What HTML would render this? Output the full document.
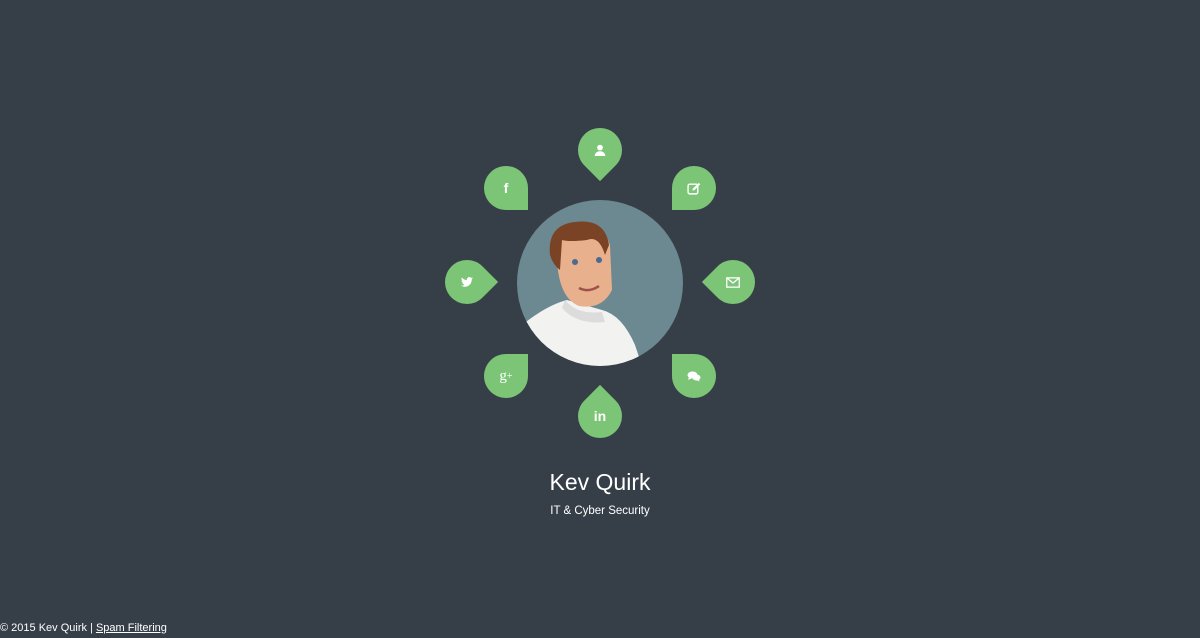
<!DOCTYPE html>
<html><head><meta charset="utf-8"><style>
html,body{margin:0;padding:0;width:1200px;height:638px;background:#363f48;overflow:hidden;font-family:"Liberation Sans",sans-serif}
.p{position:absolute;width:44px;height:44px;background:#7cc576;border-radius:50%}
.ic{position:absolute;width:44px;height:44px;display:flex;align-items:center;justify-content:center;color:#fff;font-size:14px;font-weight:bold}
.av{position:absolute;left:517px;top:200px;width:166px;height:166px;border-radius:50%;background:#6c8891;overflow:hidden}
h1{position:absolute;top:469px;left:0;width:1200px;text-align:center;margin:0;font-weight:normal;font-size:23px;color:#fff}
.sub{position:absolute;top:505px;left:0;width:1200px;text-align:center;font-size:11.5px;color:#fff}
.ft{position:absolute;left:0;top:622px;font-size:11px;color:#fff}
.ft u{text-decoration:underline}
</style></head><body>
<div class="p" style="left:578px;top:128px;transform:rotate(45deg);border-bottom-right-radius:0"></div>
<div class="ic" style="left:578px;top:128px"><svg width="12" height="12" viewBox="0 0 10 10"><circle cx="5" cy="3" r="2.4" fill="#fff"/><path d="M0.5 10 Q1 6 5 6 Q9 6 9.5 10Z" fill="#fff"/></svg></div>
<div class="p" style="left:484px;top:166px;border-bottom-right-radius:0"></div>
<div class="ic" style="left:484px;top:166px">f</div>
<div class="p" style="left:672px;top:166px;border-bottom-left-radius:0"></div>
<div class="ic" style="left:672px;top:166px"><svg width="14" height="13" viewBox="0 0 13 12"><rect x="1" y="2" width="9" height="9" rx="1.5" fill="none" stroke="#fff" stroke-width="1.3"/><path d="M5 8 L5.5 6 L11 0.8 L12.3 2 L7 7.5Z" fill="#fff"/></svg></div>
<div class="p" style="left:445px;top:260px;transform:rotate(45deg);border-top-right-radius:0"></div>
<div class="ic" style="left:445px;top:260px"><svg width="12" height="10" viewBox="0 0 24 20"><path d="M24 2.4a10 10 0 0 1-2.8.8A5 5 0 0 0 23.3.5a10 10 0 0 1-3.1 1.2A4.9 4.9 0 0 0 11.8 6 14 14 0 0 1 1.700.9a4.9 4.9 0 0 0 1.5 6.6A4.9 4.9 0 0 1 1 6.9a4.9 4.9 0 0 0 3.9 4.8 4.9 4.9 0 0 1-2.2.1 4.9 4.9 0 0 0 4.6 3.4A9.9 9.9 0 0 1 0 17.3 14 14 0 0 0 7.5 19.5c9 0 14-7.5 14-14v-.6A10 10 0 0 0 24 2.4z" fill="#fff"/></svg></div>
<div class="p" style="left:711px;top:260px;transform:rotate(45deg);border-bottom-left-radius:0"></div>
<div class="ic" style="left:711px;top:260px"><svg width="14" height="11" viewBox="0 0 13 10"><rect x="0.7" y="0.7" width="11.6" height="8.6" fill="none" stroke="#fff" stroke-width="1.2"/><path d="M0.7 0.7 L6.5 5.5 L12.3 0.7" fill="none" stroke="#fff" stroke-width="1.2"/></svg></div>
<div class="p" style="left:484px;top:354px;border-top-right-radius:0"></div>
<div class="ic" style="left:484px;top:354px;font-family:'Liberation Serif',serif;font-weight:normal;font-size:15px">g<sup style="font-size:10px">+</sup></div>
<div class="p" style="left:672px;top:354px;border-top-left-radius:0"></div>
<div class="ic" style="left:672px;top:354px"><svg width="14" height="11" viewBox="0 0 14 11"><ellipse cx="5.5" cy="4" rx="5" ry="3.5" fill="#fff"/><path d="M2 6 L1 9 L5 7Z" fill="#fff"/><ellipse cx="9.5" cy="6.5" rx="4" ry="3" fill="#fff"/><path d="M11 8 L13 10.5 L9 9Z" fill="#fff"/></svg></div>
<div class="p" style="left:578px;top:394px;transform:rotate(45deg);border-top-left-radius:0"></div>
<div class="ic" style="left:578px;top:394px">in</div>
<div class="av"><svg width="166" height="166" viewBox="0 0 166 166">
<path d="M5 125 Q30 105 50 100 L85 110 Q105 115 118 145 L125 166 L5 166Z" fill="#f2f2f0"/>
<path d="M48 100 Q60 115 85 112 L88 122 Q60 125 45 108Z" fill="#dcdcdc"/>
<path d="M40 60 Q35 30 60 25 Q85 20 93 45 L95 90 Q85 110 62 106 Q42 98 40 60Z" fill="#e8b08c"/>
<path d="M33 55 Q30 25 58 22 Q88 18 92 45 L88 55 Q82 35 70 40 Q52 42 45 40 L43 70 Q36 65 33 55Z" fill="#7a4326"/>
<circle cx="58" cy="62" r="3" fill="#4a6a90"/><circle cx="82" cy="60" r="3" fill="#4a6a90"/>
<path d="M62 88 Q72 93 82 86" stroke="#a0504a" stroke-width="2.5" fill="none"/>
</svg></div>
<h1>Kev Quirk</h1>
<div class="sub">IT &amp; Cyber Security</div>
<div class="ft">© 2015 Kev Quirk | <u>Spam Filtering</u></div>
</body></html>
